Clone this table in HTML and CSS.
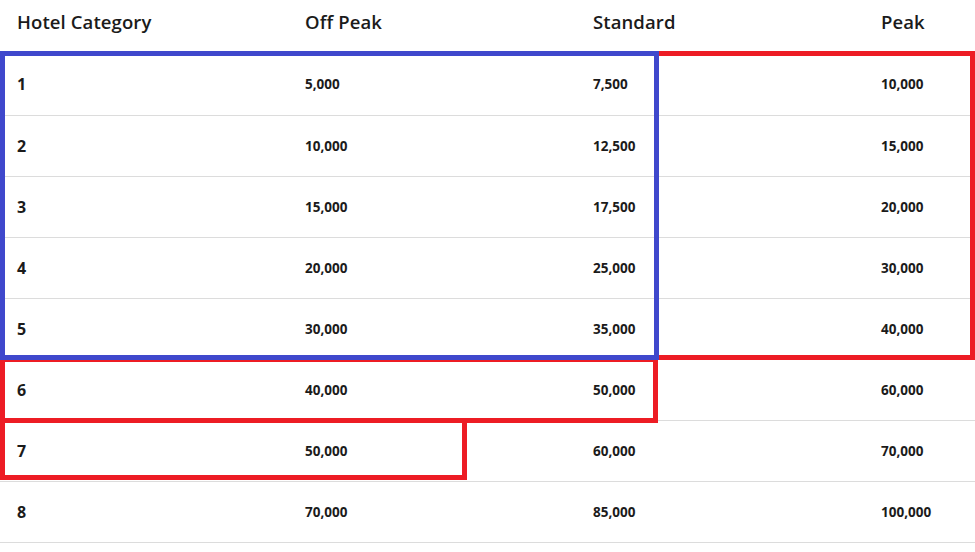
FILE: index.html
```html
<!DOCTYPE html>
<html lang="en">
<head>
    <meta charset="UTF-8">
    <meta name="viewport" content="width=device-width, initial-scale=1.0">
    <title>Hotel Category Award Chart</title>
    <link rel="stylesheet" href="styles.css">
</head>
<body>
    <div class="chart">
        <table class="awards">
            <thead>
                <tr>
                    <th>Hotel Category</th>
                    <th>Off Peak</th>
                    <th>Standard</th>
                    <th>Peak</th>
                </tr>
            </thead>
            <tbody>
                <tr><td class="cat">1</td><td>5,000</td><td>7,500</td><td>10,000</td></tr>
                <tr><td class="cat">2</td><td>10,000</td><td>12,500</td><td>15,000</td></tr>
                <tr><td class="cat">3</td><td>15,000</td><td>17,500</td><td>20,000</td></tr>
                <tr><td class="cat">4</td><td>20,000</td><td>25,000</td><td>30,000</td></tr>
                <tr><td class="cat">5</td><td>30,000</td><td>35,000</td><td>40,000</td></tr>
                <tr><td class="cat">6</td><td>40,000</td><td>50,000</td><td>60,000</td></tr>
                <tr><td class="cat">7</td><td>50,000</td><td>60,000</td><td>70,000</td></tr>
                <tr><td class="cat">8</td><td>70,000</td><td>85,000</td><td>100,000</td></tr>
            </tbody>
        </table>

        <!-- hand-drawn highlight boxes -->
        <div class="mark red peak-top"></div>
        <div class="mark red row-six"></div>
        <div class="mark red row-seven"></div>
        <div class="mark blue top-five"></div>
    </div>
</body>
</html>
```

FILE: styles.css
```css
body {
    margin: 0;
    background: #fff;
    font-family: "Open Sans", Arial, sans-serif;
    color: #1b1b1b;
}

.chart {
    position: relative;
    width: 975px;
}

.awards {
    border-collapse: collapse;
    width: 975px;
    table-layout: fixed;
}

.awards th,
.awards td {
    width: 288px;
    padding: 0 0 0 17px;
    text-align: left;
    box-sizing: border-box;
}

.awards th:last-child,
.awards td:last-child {
    width: 111px;
}

.awards th {
    height: 54px;
    padding-bottom: 12px;
    font-size: 18.5px;
    font-weight: 600;
    letter-spacing: 0.1px;
    vertical-align: middle;
}

.awards td {
    height: 61px;
    font-size: 13.5px;
    font-weight: 700;
    border-bottom: 1px solid #dcdcdc;
    vertical-align: middle;
}

.awards td.cat {
    font-size: 16px;
    font-weight: 700;
}

.mark {
    position: absolute;
    box-sizing: border-box;
    border: 5px solid;
}

.red {
    border-color: #ed1c24;
}

.blue {
    border-color: #3f48cc;
}

.top-five {
    left: 0;
    top: 51px;
    width: 659px;
    height: 309px;
}

.peak-top {
    left: 654px;
    top: 51px;
    width: 321px;
    height: 309px;
}

.row-six {
    left: 0;
    top: 357px;
    width: 658px;
    height: 66px;
}

.row-seven {
    left: 0;
    top: 418px;
    width: 467px;
    height: 62px;
}
```
